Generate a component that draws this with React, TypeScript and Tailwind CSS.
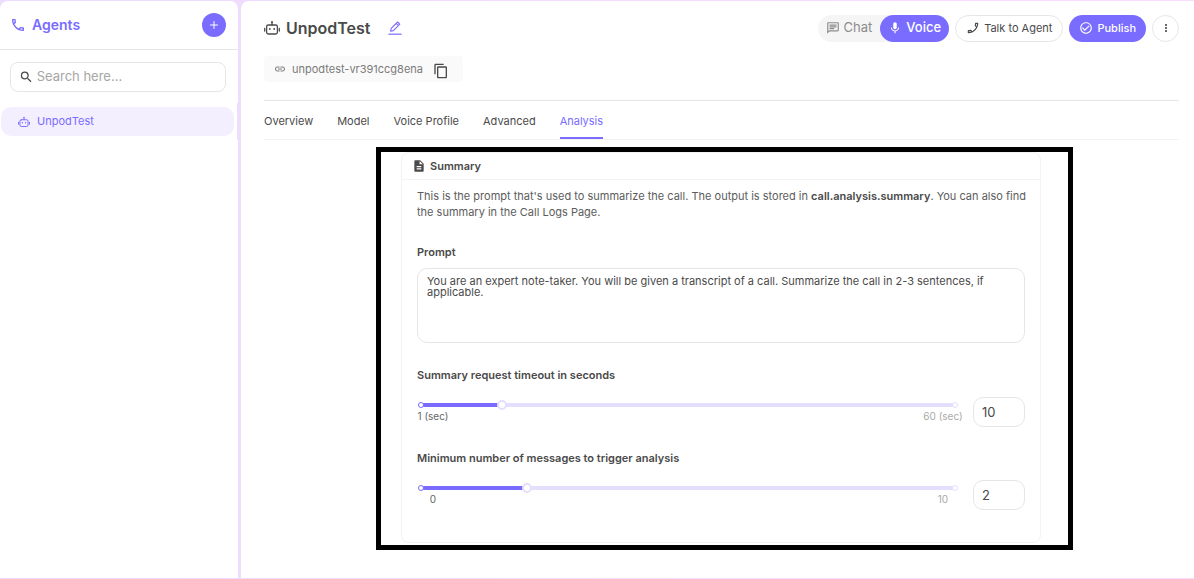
import { useState } from "react";
import {
  MdCheckCircleOutline,
  MdContentCopy,
  MdDescription,
  MdMic,
  MdMoreVert,
  MdOutlineCall,
  MdOutlineChat,
  MdSearch,
  MdLink,
} from "react-icons/md";
import { Plus } from "lucide-react";

function BotIcon({ className }: { className?: string }) {
  return (
    <svg viewBox="0 0 16 16" className={className} fill="none" stroke="currentColor" strokeLinecap="round" aria-hidden="true">
      <rect x="2.6" y="5" width="10.8" height="9" rx="1.8" strokeWidth="1.3" />
      <path d="M8 5V2.6M.7 8.4v2.6M15.3 8.4v2.6" strokeWidth="1.3" />
      <circle cx="8" cy="2" r="1" fill="currentColor" stroke="none" />
      <circle cx="5.8" cy="9" r=".9" fill="currentColor" stroke="none" />
      <circle cx="10.2" cy="9" r=".9" fill="currentColor" stroke="none" />
    </svg>
  );
}

function EditIcon({ className }: { className?: string }) {
  return (
    <svg viewBox="0 0 14 14" className={className} fill="none" stroke="currentColor" strokeLinejoin="round" aria-hidden="true">
      <path d="M2.6 10.2l.6-2.8L9.6 1l2.2 2.2-6.4 6.4zM8.2 2.4l2.2 2.2" strokeWidth="1.1" />
      <path d="M.4 13.2h13.2" strokeWidth="1.2" />
    </svg>
  );
}

const tabs = ["Overview", "Model", "Voice Profile", "Advanced", "Analysis"];

type SliderProps = {
  id: string;
  label: string;
  min: number;
  max: number;
  initial: number;
  minLabel: string;
  maxLabel: string;
};

function SliderField({ id, label, min, max, initial, minLabel, maxLabel }: SliderProps) {
  const [value, setValue] = useState(initial);
  const percent = ((value - min) / (max - min)) * 100;
  return (
    <div>
      <label htmlFor={id} className="block text-[11px] leading-4 font-semibold">
        {label}
      </label>
      <div className="mt-3.5 flex items-start">
        <div className="min-w-0 flex-1 pr-2.5 pt-0.5">
          <div className="relative mr-0.5 -ml-0.5 h-3">
            <div className="absolute inset-x-1.5 top-1 h-1 rounded-full bg-[#e4dfff]">
              <div className="h-1 rounded-full bg-[#796cff]" style={{ width: `${percent}%` }} />
            </div>
            <span className="absolute top-[3px] left-[3px] size-1.5 rounded-full border border-[#796cff] bg-white" />
            <span className="absolute top-[3px] right-[3px] size-1.5 rounded-full border border-[#e4dfff] bg-white" />
            <input
              id={id}
              type="range"
              min={min}
              max={max}
              value={value}
              onChange={(e) => setValue(Number(e.target.value))}
              className="absolute inset-0 h-3 w-full cursor-pointer appearance-none bg-transparent [&::-webkit-slider-thumb]:size-2.5 [&::-webkit-slider-thumb]:appearance-none [&::-webkit-slider-thumb]:rounded-full [&::-webkit-slider-thumb]:border-2 [&::-webkit-slider-thumb]:border-[#e4dfff] [&::-webkit-slider-thumb]:bg-white"
            />
          </div>
          <div className="flex justify-between text-[10px] leading-[10px] whitespace-nowrap">
            <span className="w-8 text-center text-[#666666]">{minLabel}</span>
            <span className="w-10 text-center text-[#a9a9a9]">{maxLabel}</span>
          </div>
        </div>
        <input
          type="text"
          inputMode="numeric"
          aria-label={`${label} value`}
          value={value}
          onChange={(e) => setValue(Math.min(max, Math.max(min, Number(e.target.value) || min)))}
          className="h-[30px] w-[52px] rounded-[10px] border border-[#e6e6e6] px-2 text-[13px] outline-none"
        />
      </div>
    </div>
  );
}

export default function App() {
  return (
    <div className="flex min-h-screen gap-[3px] bg-linear-to-r from-[#ecdcff] to-[#fadcff] py-px font-[Inter,sans-serif] text-[#4a4a4a]">
      <aside className="flex w-[238px] shrink-0 flex-col rounded-t-lg bg-white">
        <div className="box-content flex h-12 items-center border-b border-[#e6e6e6] pr-3 pl-2.5">
          <MdOutlineCall className="size-4 text-[#796cff]" aria-hidden="true" />
          <h2 className="ml-1.5 text-sm font-semibold text-[#796cff]">Agents</h2>
          <button type="button" aria-label="Add agent" className="ml-auto flex size-6 items-center justify-center rounded-full bg-[#796cff] text-white">
            <Plus className="size-3" />
          </button>
        </div>
        <div className="mt-3 mr-3 ml-2.5 flex h-[30px] items-center rounded-lg border border-[#e6e6e6] pl-2">
          <MdSearch className="size-4" aria-hidden="true" />
          <input type="search" aria-label="Search agents" placeholder="Search here..." className="ml-[3px] w-full min-w-0 text-[13px] outline-none placeholder:text-[#a6a6a6]" />
        </div>
        <nav className="mt-[11px] border-r border-[#e9e2fb] py-1 pr-[3px] pl-px">
          <a href="#unpodtest" className="flex h-[29px] items-center rounded-[10px] bg-[#f4efff] pl-[17px] text-[11px] text-[#796cff]">
            <BotIcon className="size-3" />
            <span className="ml-[7px]">UnpodTest</span>
          </a>
        </nav>
      </aside>

      <main className="min-w-0 flex-1 rounded-tl-lg bg-white pr-[15px] pl-[23px]">
        <header className="border-b border-[#e6e6e6] pt-[13px] pb-[18px]">
          <div className="flex items-center">
            <BotIcon className="size-4" />
            <h1 className="ml-1.5 text-base leading-7 font-semibold">UnpodTest</h1>
            <button type="button" aria-label="Rename agent" className="ml-[18px] text-[#796cff]">
              <EditIcon className="size-3.5" />
            </button>
            <div className="ml-auto flex items-center gap-1.5">
              <div className="flex h-[27px] items-center rounded-full bg-[#f5f5f5] text-[13px]">
                <button type="button" className="flex h-full items-center gap-1 px-2 text-[#8c8c8c]">
                  <MdOutlineChat className="size-3.5" aria-hidden="true" />
                  Chat
                </button>
                <button type="button" className="flex h-full items-center gap-1 rounded-full bg-[#796cff] px-2 font-medium text-white">
                  <MdMic className="size-3.5" aria-hidden="true" />
                  Voice
                </button>
              </div>
              <button type="button" className="flex h-[27px] items-center gap-1 rounded-full border border-[#e6e6e6] px-2.5 text-[11px]">
                <MdOutlineCall className="size-3.5 -rotate-90" aria-hidden="true" />
                Talk to Agent
              </button>
              <button type="button" className="flex h-[27px] items-center gap-1 rounded-full bg-[#796cff] px-2.5 text-[11px] font-medium text-white">
                <MdCheckCircleOutline className="size-3.5" aria-hidden="true" />
                Publish
              </button>
              <button type="button" aria-label="More actions" className="flex size-[27px] items-center justify-center rounded-full border border-[#e6e6e6]">
                <MdMoreVert className="size-3" />
              </button>
            </div>
          </div>
          <div className="mt-3.5 inline-flex h-[26px] items-center rounded bg-[#fafafa] pr-3.5 pl-2.5 align-top text-[#7a7a7a]">
            <MdLink className="size-3" aria-hidden="true" />
            <span className="ml-1.5 text-[11px]">unpodtest-vr391ccg8ena</span>
            <button type="button" aria-label="Copy agent id" className="mt-1 ml-2.5 text-[#4a4a4a]">
              <MdContentCopy className="size-4" />
            </button>
          </div>
        </header>

        <nav className="flex gap-6 border-b border-[#f3f3f3] text-[11px]">
          {tabs.map((tab) => (
            <a
              key={tab}
              href={`#${tab.toLowerCase().replace(" ", "-")}`}
              aria-current={tab === "Analysis" ? "page" : undefined}
              className={
                tab === "Analysis"
                  ? "border-b-2 border-[#796cff] pt-3 pb-2 leading-4 text-[#796cff]"
                  : "border-b-2 border-transparent pt-3 pb-2 leading-4"
              }
            >
              {tab}
            </a>
          ))}
        </nav>

        <div className="mt-[7px] pl-1.5">
          <div className="mx-auto w-full max-w-[697px] border-[5px] border-black pr-[27px] pb-0.5 pl-5">
            <section className="rounded-lg border border-[#f3f3f3] pb-8">
              <div className="flex h-[27px] items-center gap-1 border-b border-[#f3f3f3] pl-2.5">
                <MdDescription className="size-3.5" aria-hidden="true" />
                <h3 className="text-[11px] font-semibold">Summary</h3>
              </div>
              <div className="px-[15px] pt-2">
                <p className="-mr-2.5 text-[11px] leading-4 text-[#5c5c5c]">
                  This is the prompt that's used to summarize the call. The output is stored in{" "}
                  <strong className="font-semibold text-[#4a4a4a]">call.analysis.summary</strong>. You can also find
                  the summary in the Call Logs Page.
                </p>
                <label htmlFor="prompt" className="mt-6 block text-[11px] leading-4 font-semibold">
                  Prompt
                </label>
                <textarea
                  id="prompt"
                  defaultValue="You are an expert note-taker. You will be given a transcript of a call. Summarize the call in 2-3 sentences, if applicable."
                  className="mt-2 block h-[75px] w-full resize-none rounded-[10px] border border-[#e6e6e6] px-[9px] py-[7px] text-[11px] leading-[11px] outline-none"
                />
                <div className="mt-6 flex flex-col gap-[23px]">
                  <SliderField id="timeout" label="Summary request timeout in seconds" min={1} max={60} initial={10} minLabel="1 (sec)" maxLabel="60 (sec)" />
                  <SliderField id="messages" label="Minimum number of messages to trigger analysis" min={0} max={10} initial={2} minLabel="0" maxLabel="10" />
                </div>
              </div>
            </section>
          </div>
        </div>
      </main>
    </div>
  );
}
